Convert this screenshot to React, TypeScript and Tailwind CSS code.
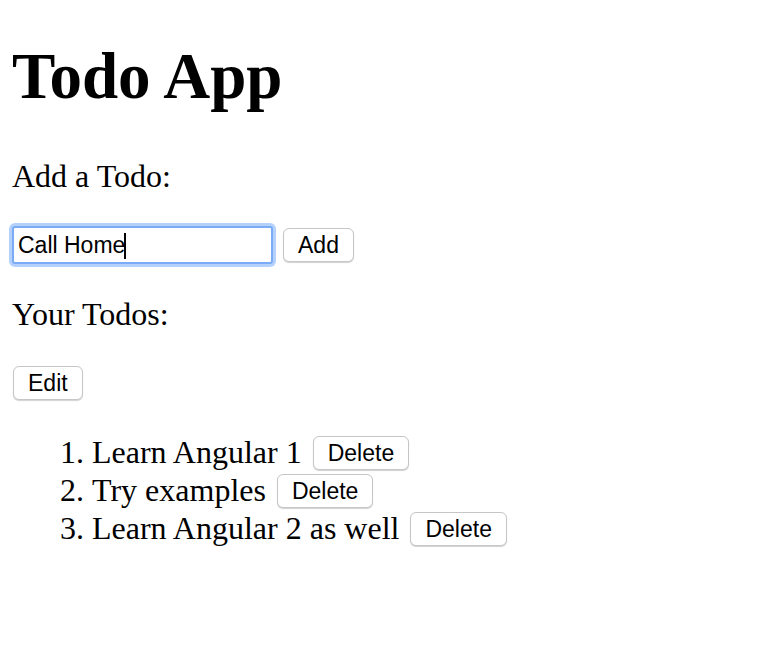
const todos = ['Learn Angular 1', 'Try examples', 'Learn Angular 2 as well']

const btn =
  "inline-block bg-white border border-[#c6c6c6] rounded-[6px] shadow-[0_1px_1px_rgba(0,0,0,0.18)] px-[14px] pt-[4px] pb-[3px] text-[23px] leading-[25px] font-['Liberation_Sans',Arial,sans-serif] text-black"

const App = () => {
  return (
    <div className="min-h-screen w-full bg-white text-black font-['Liberation_Serif','Times_New_Roman',serif] pl-[12px] pt-[39px]">
      <h1 className="text-[65px] leading-[75px] font-bold">Todo App</h1>

      <p className="mt-[44px] text-[32px] leading-[37px]">Add a Todo:</p>

      {/* input row */}
      <div className="mt-[31px] flex items-center gap-[10px]">
        <div className="relative">
          <input
            readOnly
            value="Call Home"
            className="block w-[261px] h-[38px] border-2 border-[#7aabf6] rounded-[3px] shadow-[0_0_0_3px_#b3d1fb] bg-white px-[4px] text-[23px] font-['Liberation_Sans',Arial,sans-serif] text-black outline-none"
          />
          <span className="absolute left-[112px] top-[7px] w-[2px] h-[26px] bg-black" />
        </div>
        <button className={btn}>Add</button>
      </div>

      <p className="mt-[32px] text-[32px] leading-[37px]">Your Todos:</p>

      <div className="mt-[33px] pl-[1px]">
        <button className={btn}>Edit</button>
      </div>

      <ol className="mt-[33px] list-decimal pl-[80px] text-[32px] leading-[38px]">
        {todos.map((t) => (
          <li key={t}>
            {t} <button className={btn + ' ml-[3px] align-[2px]'}>Delete</button>
          </li>
        ))}
      </ol>
    </div>
  )
}

export default App
